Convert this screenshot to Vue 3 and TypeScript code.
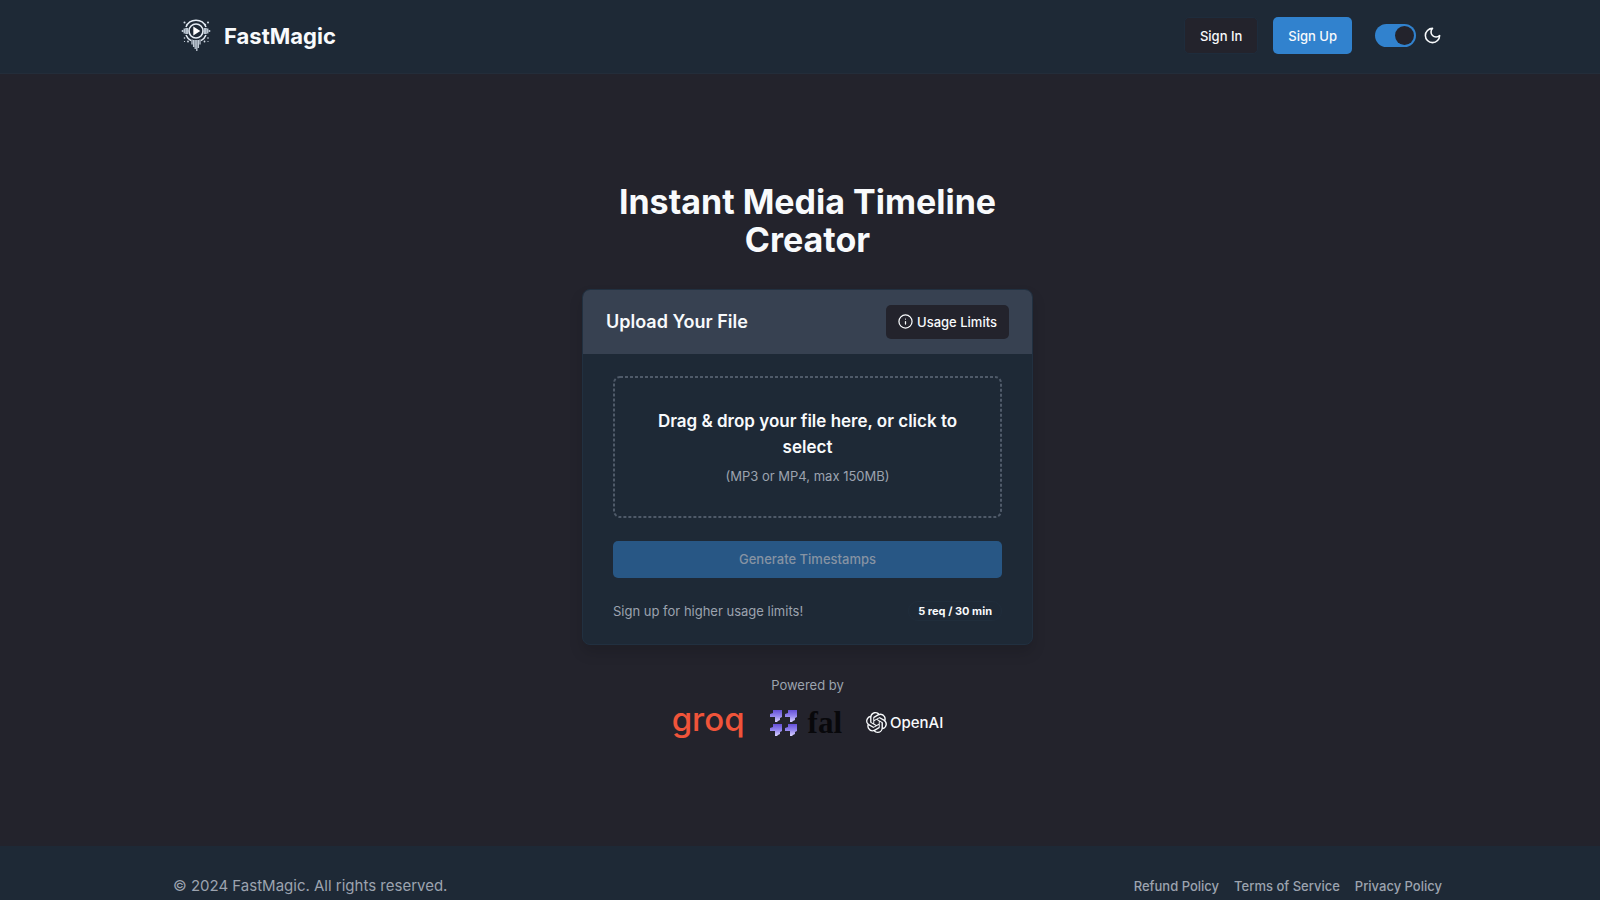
<script setup lang="ts">
import { ref } from 'vue'

const darkMode = ref(true)
const brand = 'FastMagic'
const links: string[] = ['Refund Policy', 'Terms of Service', 'Privacy Policy']
</script>

<template>
  <div class="page">
    <header class="bar">
      <div class="container">
        <a href="#" class="brand">
          <svg class="brand-mark" viewBox="0 0 32 34" aria-hidden="true">
            <g fill="none" stroke="#e6edf5">
              <circle cx="16" cy="12" r="7" stroke-width="1.6" />
              <path d="M6 8A10.8 10.8 0 0 1 26 8M6 16a10.8 10.8 0 0 0 5 5.6M26 16a10.8 10.8 0 0 1-5 5.6" stroke-width="1.5" />
              <path d="M2.500 11v2M4.300 9.500v5M6 9v6M7.500 9v6M29.500 11v2M27.700 9.500v5M26 9v6M24.500 9v6" stroke-width="1.500" stroke="#b9c4d0" />
              <path d="M12 20.500v5M13.600 21v7M15.200 21v9M16.800 21v11M18.400 21v8M20 20.500v5" stroke-width="1.300" stroke="#c0cad5" />
            </g>
            <g fill="#d5dee8">
              <path d="M13.300 7.600v8.800l7-4.400z" fill="#fff" />
              <circle cx="4.500" cy="3.500" r="1" /><circle cx="28" cy="3.500" r="1" />
              <circle cx="7" cy="5.500" r=".7" /><circle cx="25.500" cy="5.500" r=".7" />
              <circle cx="4.500" cy="19" r=".8" /><circle cx="28" cy="19" r=".8" />
              <circle cx="8" cy="22.500" r=".9" /><circle cx="24.500" cy="22.500" r=".9" />
              <circle cx="4.500" cy="22.500" r=".6" /><circle cx="28" cy="22.500" r=".6" />
            </g>
          </svg>
          <span>{{ brand }}</span>
        </a>
        <nav class="actions">
          <button type="button" class="btn btn-dark">Sign In</button>
          <button type="button" class="btn btn-blue">Sign Up</button>
          <label class="theme">
            <input v-model="darkMode" type="checkbox" role="switch" aria-label="Dark mode" />
            <svg viewBox="0 0 24 24" aria-hidden="true">
              <path d="M12 3a6 6 0 0 0 9 9 9 9 0 1 1-9-9Z" fill="none" stroke="currentColor" stroke-width="2" stroke-linecap="round" stroke-linejoin="round" />
            </svg>
          </label>
        </nav>
      </div>
    </header>

    <main>
      <h1>Instant Media Timeline Creator</h1>

      <section class="card">
        <div class="card-head">
          <h2>Upload Your File</h2>
          <button type="button" class="btn limits">
            <svg viewBox="0 0 24 24" aria-hidden="true">
              <g fill="none" stroke="currentColor" stroke-width="2" stroke-linecap="round">
                <circle cx="12" cy="12" r="10.500" /><path d="M12 16v-4M12 8h.01" />
              </g>
            </svg>
            Usage Limits
          </button>
        </div>
        <div class="card-body">
          <label class="drop">
            <svg class="outline" aria-hidden="true">
              <rect x="0" y="0" width="100%" height="100%" rx="6" />
            </svg>
            <input type="file" accept=".mp3,.mp4" />
            <span class="drop-title">Drag &amp; drop your file here, or click to select</span>
            <span class="muted">(MP3 or MP4, max 150MB)</span>
          </label>
          <button type="button" class="btn generate" disabled>Generate Timestamps</button>
          <div class="quota">
            <span class="muted">Sign up for higher usage limits!</span>
            <span class="badge">5 req / 30 min</span>
          </div>
        </div>
      </section>

      <p class="muted powered">Powered by</p>
      <div class="logos">
        <span class="groq">groq</span>
        <span class="fal">
          <svg viewBox="0 0 28 28" aria-hidden="true">
            <defs>
              <linearGradient id="violet" x1="0" y1="0" x2="0" y2="1">
                <stop offset="0" stop-color="#6550d8" />
                <stop offset=".5" stop-color="#9385ee" />
                <stop offset="1" stop-color="#d9d2ff" />
              </linearGradient>
            </defs>
            <g fill="url(#violet)">
              <path d="M4 1h9v7l-2 1v2l-2 1-1 1H6V8H1V5l3-1z" />
              <path d="M19 1h9v7l-2 1v2l-2 1-1 1h-2V8h-5V5l3-1z" />
              <path d="M4 15h9v7l-2 1v2l-2 1-1 1H6v-5H1v-3l3-1z" />
              <path d="M19 15h9v7l-2 1v2l-2 1-1 1h-2v-5h-5v-3l3-1z" />
            </g>
          </svg>
          <span>fal</span>
        </span>
        <span class="openai">
          <svg viewBox="0 0 24 24" aria-hidden="true">
            <path fill="currentColor" d="M22.2819 9.8211a5.9847 5.9847 0 0 0-.5157-4.9108 6.0462 6.0462 0 0 0-6.5098-2.9A6.0651 6.0651 0 0 0 4.9807 4.1818a5.9847 5.9847 0 0 0-3.9977 2.9 6.0462 6.0462 0 0 0 .7427 7.0966 5.98 5.98 0 0 0 .511 4.9107 6.051 6.051 0 0 0 6.5146 2.9001A5.9847 5.9847 0 0 0 13.2599 24a6.0557 6.0557 0 0 0 5.7718-4.2058 5.9894 5.9894 0 0 0 3.9977-2.9001 6.0557 6.0557 0 0 0-.7475-7.073zm-9.022 12.6081a4.4755 4.4755 0 0 1-2.8764-1.0408l.1419-.0804 4.7783-2.7582a.7948.7948 0 0 0 .3927-.6813v-6.7369l2.02 1.1686a.071.071 0 0 1 .038.052v5.5826a4.504 4.504 0 0 1-4.4945 4.4944zm-9.6607-4.1254a4.4708 4.4708 0 0 1-.5346-3.0137l.142.0852 4.783 2.7582a.7712.7712 0 0 0 .7806 0l5.8428-3.3685v2.3324a.0804.0804 0 0 1-.0332.0615L9.74 19.9502a4.4992 4.4992 0 0 1-6.1408-1.6464zM2.3408 7.8956a4.485 4.485 0 0 1 2.3655-1.9728V11.6a.7664.7664 0 0 0 .3879.6765l5.8144 3.3543-2.0201 1.1685a.0757.0757 0 0 1-.071 0l-4.8303-2.7865A4.504 4.504 0 0 1 2.3408 7.872zm16.5963 3.8558L13.1038 8.364 15.1192 7.2a.0757.0757 0 0 1 .071 0l4.8303 2.7913a4.4944 4.4944 0 0 1-.6765 8.1042v-5.6772a.79.79 0 0 0-.407-.667zm2.0107-3.0231l-.142-.0852-4.7735-2.7818a.7759.7759 0 0 0-.7854 0L9.409 9.2297V6.8974a.0662.0662 0 0 1 .0284-.0615l4.8303-2.7866a4.4992 4.4992 0 0 1 6.6802 4.66zM8.3065 12.863l-2.02-1.1638a.0804.0804 0 0 1-.038-.0567V6.0742a4.4992 4.4992 0 0 1 7.3757-3.4537l-.142.0805L8.704 5.459a.7948.7948 0 0 0-.3927.6813zm1.0976-2.3654l2.602-1.4998 2.6069 1.4998v2.9994l-2.5974 1.4997-2.6067-1.4997Z" />
          </svg>
          <span>OpenAI</span>
        </span>
      </div>
    </main>

    <footer>
      <div class="container">
        <span class="copy">© 2024 {{ brand }}. All rights reserved.</span>
        <nav class="links">
          <a v-for="link in links" :key="link" href="#">{{ link }}</a>
        </nav>
      </div>
    </footer>
  </div>
</template>

<style>
body {
  margin: 0;
  background: #23232c;
}
</style>

<style scoped>
* {
  box-sizing: border-box;
}
.page {
  min-height: 100vh;
  display: flex;
  flex-direction: column;
  background: #23232c;
  color: #f8fafc;
  font-family: Inter, "Liberation Sans", sans-serif;
  font-size: 13px;
  line-height: 20px;
}
h1, h2, p {
  margin: 0;
}
a {
  color: inherit;
  text-decoration: none;
}
.container {
  display: flex;
  align-items: center;
  justify-content: space-between;
  padding: 0 158px 0 173px;
}
.bar {
  padding: 17px 0 19px;
  background: #1e2936;
  border-bottom: 1px solid #232d3a;
}
.brand {
  display: flex;
  align-items: center;
  gap: 12px;
  padding-left: 7px;
  font-size: 22px;
  font-weight: 700;
  line-height: 30px;
}
.brand-mark {
  width: 32px;
  height: 34px;
}
.actions {
  display: flex;
  align-items: center;
  gap: 15px;
}
.btn {
  display: inline-flex;
  align-items: center;
  justify-content: center;
  height: 37px;
  padding: 0 15px;
  border: 0;
  border-radius: 5px;
  color: #f8fafc;
  font: 500 13px/20px Inter, "Liberation Sans", sans-serif;
}
.btn-dark {
  background: #23232c;
  border: 1px solid #1e2c3c;
}
.btn-blue {
  background: #3182ce;
}
.theme {
  display: flex;
  align-items: center;
  gap: 7px;
  padding-left: 8px;
}
.theme input {
  appearance: none;
  display: flex;
  width: 41px;
  height: 23px;
  margin: 0;
  padding: 2px;
  border-radius: 12px;
  background: #4a5568;
}
.theme input::before {
  content: "";
  width: 19px;
  height: 19px;
  border-radius: 50%;
  background: #23232c;
}
.theme input:checked {
  justify-content: flex-end;
  background: #3182ce;
}
.theme svg {
  width: 19px;
  height: 19px;
}
main {
  flex: 1;
  display: flex;
  flex-direction: column;
  align-items: center;
  justify-content: center;
  padding-left: 15px;
}
h1 {
  width: 100%;
  max-width: 450px;
  margin-bottom: 30px;
  font-size: 34px;
  font-weight: 700;
  line-height: 38px;
  text-align: center;
}
.card {
  width: 100%;
  max-width: 451px;
  border: 1px solid #213040;
  border-radius: 8px;
  background: #1e2936;
  box-shadow: 0 8px 14px rgba(0, 0, 0, 0.13);
  overflow: hidden;
}
.card-head {
  display: flex;
  align-items: center;
  justify-content: space-between;
  padding: 15px 23px;
  background: #374151;
}
h2 {
  font-size: 18px;
  font-weight: 600;
  line-height: 28px;
}
.limits {
  height: 34px;
  padding: 0 12px;
  gap: 4px;
  background: #23232c;
}
.limits svg {
  width: 15px;
  height: 15px;
}
.card-body {
  display: flex;
  flex-direction: column;
  gap: 23px;
  padding: 22px 30px 23px;
}
.drop {
  position: relative;
  display: flex;
  flex-direction: column;
  align-items: center;
  gap: 6px;
  padding: 32px;
  text-align: center;
}
.outline {
  position: absolute;
  inset: 1px;
  width: calc(100% - 2px);
  height: calc(100% - 2px);
  overflow: visible;
}
.outline rect {
  fill: none;
  stroke: #4f5a69;
  stroke-width: 2;
  stroke-dasharray: 3 2;
}
.drop input {
  display: none;
}
.drop-title {
  font-size: 17px;
  font-weight: 600;
  line-height: 26px;
}
.muted {
  color: #9ca3af;
}
.generate {
  background: #285785;
  color: #8693a3;
}
.quota {
  display: flex;
  align-items: center;
  justify-content: space-between;
}
.badge {
  padding: 0 9px;
  border: 1px solid #202d3b;
  border-radius: 10px;
  font-size: 11px;
  font-weight: 700;
  line-height: 18px;
}
.powered {
  margin: 30px 0 13px;
}
.logos {
  display: flex;
  align-items: center;
  height: 30px;
  gap: 24px;
}
.groq {
  padding-bottom: 8px;
  color: #f0543a;
  font-size: 33px;
  font-weight: 500;
  line-height: 30px;
}
.fal {
  display: flex;
  align-items: center;
  gap: 11px;
  color: #08080b;
  font: 700 31px/30px "Liberation Serif", serif;
}
.fal svg {
  width: 28px;
  height: 28px;
}
.openai {
  display: flex;
  align-items: center;
  gap: 3px;
  font-size: 15px;
  font-weight: 500;
}
.openai svg {
  width: 21px;
  height: 21px;
}
footer {
  padding: 28px 0 2px;
  background: #1e2936;
  color: #9ca3af;
}
.copy {
  font-size: 15px;
  line-height: 24px;
}
.links {
  display: flex;
  gap: 15px;
  font-weight: 500;
}
</style>
